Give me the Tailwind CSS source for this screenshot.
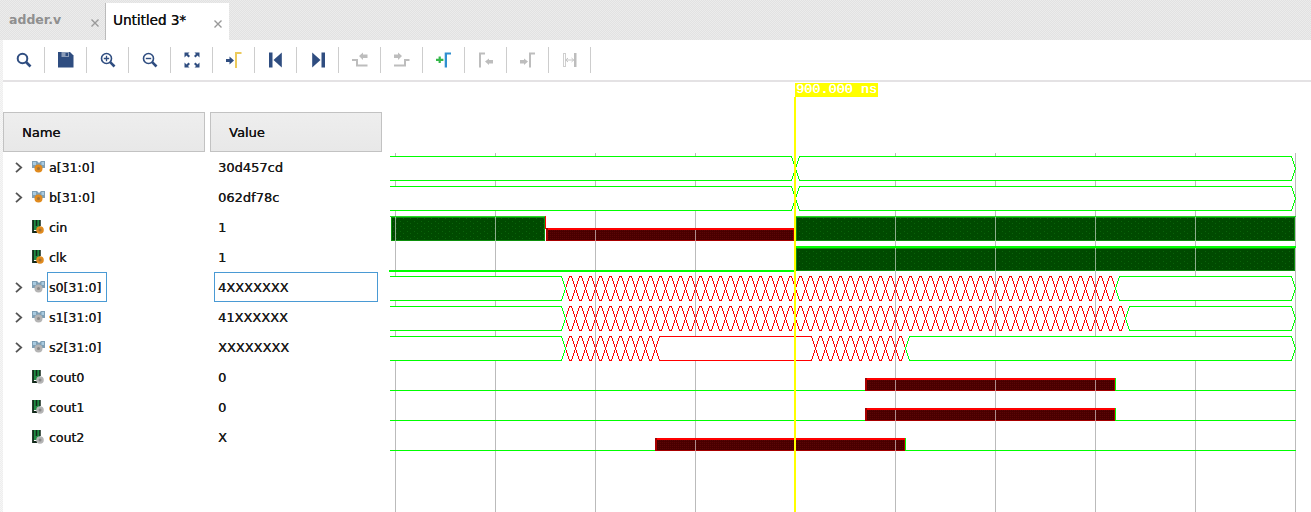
<!DOCTYPE html>
<html lang="en">
<head>
  <meta charset="UTF-8" />
  <title>Waveform</title>
  <script src="https://cdn.jsdelivr.net/npm/@tailwindcss/browser@4"></script>
</head>
<body class="bg-white">
<div class="w-[1311px] h-[512px] overflow-hidden flex flex-col font-['DejaVu_Sans',sans-serif] bg-[repeating-conic-gradient(#eeeeee_0_25%,#f6f6f6_0_50%)] bg-[length:2px_2px]">

  <!-- Tabs -->
  <div class="h-10 flex pl-[3px] bg-[repeating-conic-gradient(#e2e2e2_0_25%,#ececec_0_50%)] bg-[length:2px_2px]">
    <div class="w-[102px] flex items-center pl-[6px] relative">
      <span class="text-[12.5px] font-bold text-[#8f8f8f]">adder.v</span>
      <svg class="ml-[30px] mt-[5px]" width="8" height="8" viewBox="0 0 8 8"><path d="M0.5 0.5 7.5 7.5M7.5 0.5 0.5 7.5" stroke="#999" stroke-width="1.4"/></svg>
    </div>
    <div class="w-px mt-[3px] bg-[#bbb]"></div>
    <div class="w-[123px] mt-[3px] bg-white flex items-center pl-[7px] pb-[3px]">
      <span class="text-[13.5px] text-[#111] [text-shadow:0.3px_0_0_#111]">Untitled 3*</span>
      <svg class="ml-[28px] mt-[7px]" width="8" height="8" viewBox="0 0 8 8"><path d="M0.5 0.5 7.5 7.5M7.5 0.5 0.5 7.5" stroke="#999" stroke-width="1.4"/></svg>
    </div>
  </div>

  <!-- Toolbar -->
  <div class="h-10 ml-[3px] flex items-center bg-white">
    <div class="w-[41px] flex justify-center"><svg width="16" height="16" viewBox="0 0 16 16" fill="none" stroke="#2f4d80"><circle cx="6.5" cy="6.5" r="4.8" stroke-width="2"/><path d="M10 10 14.5 14.5" stroke-width="2.6"/></svg></div>
    <span class="w-px h-[26px] bg-[#cdcdcd]"></span>
    <div class="w-[41px] flex justify-center"><svg width="16" height="16" viewBox="0 0 16 16"><path d="M0 0H12L15.5 3.5V15.5H0Z" fill="#2f4d80"/><rect x="3.5" y="0" width="7.5" height="5" fill="#8b9cb8"/><rect x="7.5" y="1" width="2.5" height="3" fill="#2f4d80"/></svg></div>
    <span class="w-px h-[26px] bg-[#cdcdcd]"></span>
    <div class="w-[41px] flex justify-center"><svg width="16" height="16" viewBox="0 0 16 16" fill="none" stroke="#2f4d80"><circle cx="6.5" cy="6.5" r="5" stroke-width="1.6"/><path d="M10.2 10.2 14.5 14.5" stroke-width="2.6"/><path d="M3.8 6.5H9.2M6.5 3.8V9.2" stroke-width="1.3"/></svg></div>
    <span class="w-px h-[26px] bg-[#cdcdcd]"></span>
    <div class="w-[41px] flex justify-center"><svg width="16" height="16" viewBox="0 0 16 16" fill="none" stroke="#2f4d80"><circle cx="6.5" cy="6.5" r="5" stroke-width="1.6"/><path d="M10.2 10.2 14.5 14.5" stroke-width="2.6"/><path d="M3.8 6.5H9.2" stroke-width="1.4"/></svg></div>
    <span class="w-px h-[26px] bg-[#cdcdcd]"></span>
    <div class="w-[41px] flex justify-center"><svg width="16" height="16" viewBox="0 0 16 16" fill="#2f4d80"><path d="M0.500 0.500H5.500L4 2 6 4 4.500 5.500 2.500 3.500 0.500 5.500Z"/><path d="M15.500 0.500H10.500L12 2 10 4 11.500 5.500 13.500 3.500 15.500 5.500Z"/><path d="M0.500 15.500H5.500L4 14 6 12 4.500 10.500 2.500 12.500 0.500 10.500Z"/><path d="M15.500 15.500H10.500L12 14 10 12 11.500 10.500 13.500 12.500 15.500 10.500Z"/></svg></div>
    <span class="w-px h-[26px] bg-[#cdcdcd]"></span>
    <div class="w-[41px] flex justify-center"><svg width="16" height="16" viewBox="0 0 16 16"><path d="M0 7H3.5V4.5L8 8.5 3.5 12.5V10H0Z" fill="#2f4d80"/><path d="M9 16V0H15.5V2H11V16Z" fill="#ecca5c"/></svg></div>
    <span class="w-px h-[26px] bg-[#cdcdcd]"></span>
    <div class="w-[41px] flex justify-center"><svg width="16" height="16" viewBox="0 0 16 16" fill="#2f4d80"><rect x="1" y="0.5" width="3.5" height="15"/><path d="M13.8 0.5V15.5L5.5 8Z"/></svg></div>
    <span class="w-px h-[26px] bg-[#cdcdcd]"></span>
    <div class="w-[41px] flex justify-center"><svg width="16" height="16" viewBox="0 0 16 16" fill="#2f4d80"><rect x="11.5" y="0.5" width="3.5" height="15"/><path d="M2.2 0.5V15.5L10.5 8Z"/></svg></div>
    <span class="w-px h-[26px] bg-[#cdcdcd]"></span>
    <div class="w-[41px] flex justify-center"><svg width="16" height="16" viewBox="0 0 16 16"><path d="M0 8H5V13.5H15.5" fill="none" stroke="#bdbdbd" stroke-width="2"/><path d="M7 4 11 0.5V2.5H15.5V6H11V8Z" fill="#bdbdbd"/></svg></div>
    <span class="w-px h-[26px] bg-[#cdcdcd]"></span>
    <div class="w-[41px] flex justify-center"><svg width="16" height="16" viewBox="0 0 16 16"><path d="M0 13.5H11V8H15.5" fill="none" stroke="#bdbdbd" stroke-width="2"/><path d="M0 2.5H4V0.5L8 4 4 8V6H0Z" fill="#bdbdbd"/></svg></div>
    <span class="w-px h-[26px] bg-[#cdcdcd]"></span>
    <div class="w-[41px] flex justify-center"><svg width="16" height="16" viewBox="0 0 16 16"><path d="M2.6 5H4.8V7.2H7.4V9.4H4.8V11.6H2.6V9.4H0V7.2H2.6Z" transform="translate(0 -0.5)" fill="#35b84a"/><path d="M8.7 15.5V0.5H15V2.5H11V15.5Z" fill="#2f8fd0"/></svg></div>
    <span class="w-px h-[26px] bg-[#cdcdcd]"></span>
    <div class="w-[41px] flex justify-center"><svg width="16" height="16" viewBox="0 0 16 16" fill="#bdbdbd"><path d="M1 15.5V0.5H7V2.5H3V15.5Z"/><path d="M7 9.5 11 6.5V8H15V11.5H11V13Z"/></svg></div>
    <span class="w-px h-[26px] bg-[#cdcdcd]"></span>
    <div class="w-[41px] flex justify-center"><svg width="16" height="16" viewBox="0 0 16 16" fill="#bdbdbd"><path d="M9 15.5V0.5H15V2.5H11V15.5Z"/><path d="M0 8H4V6.5L8 9.5 4 13V11.5H0Z"/></svg></div>
    <span class="w-px h-[26px] bg-[#cdcdcd]"></span>
    <div class="w-[41px] flex justify-center"><svg width="16" height="16" viewBox="0 0 16 16"><rect x="1.5" y="1.5" width="2" height="13" fill="none" stroke="#cfcfcf"/><rect x="12" y="1" width="2.5" height="14" fill="#bdbdbd"/><path d="M3.5 8H12M6 6 3.8 8 6 10M9.5 6 11.7 8 9.5 10" fill="none" stroke="#c4c4c4"/></svg></div>
    <span class="w-px h-[26px] bg-[#cdcdcd]"></span>
  </div>
  <div class="h-0.5 ml-[3px] bg-[#e4e2e4]"></div>

  <!-- Main -->
  <div class="flex-1 flex min-h-0 ml-[3px] bg-white">
    <div class="w-[382px] pt-[30px] shrink-0">
      <div class="flex gap-[5px]">
        <div class="w-[202px] h-10 border border-[#c2c2c2] bg-linear-to-b from-[#eeeeee] to-[#e8e8e8] flex items-center pl-[18px] pt-px text-[13px] text-[#111] [text-shadow:0.3px_0_0_#111]">Name</div>
        <div class="w-[172px] h-10 border border-[#c2c2c2] bg-linear-to-b from-[#eeeeee] to-[#e8e8e8] flex items-center pl-[18px] pt-px text-[13px] text-[#111] [text-shadow:0.3px_0_0_#111]">Value</div>
      </div>
      <div id="rows"></div>
    </div>

    <div class="relative flex-1">
      <svg id="wave" class="block" width="926" height="430" viewBox="385 82 926 430" shape-rendering="crispEdges">
        <defs>
          <pattern id="gd" width="7" height="5" patternUnits="userSpaceOnUse">
            <rect width="7" height="5" fill="#004a00"/><rect x="1" y="1" width="1" height="1" fill="#0a640a"/><rect x="4" y="3" width="1" height="1" fill="#0a640a"/>
          </pattern>
          <pattern id="rd" width="2" height="2" patternUnits="userSpaceOnUse">
            <rect width="2" height="2" fill="#4a0000"/><rect width="1" height="1" fill="#5c0606"/>
          </pattern>
        </defs>
      </svg>
      <div class="absolute left-[410px] top-px w-[83px] h-[14px] bg-[#ffff00] text-white font-['Liberation_Mono',monospace] text-[13.5px] leading-[14px] pl-px whitespace-nowrap [text-shadow:0.4px_0_0_#fff]">900.000 ns</div>
    </div>
  </div>
</div>

<script>
  const chevron = `<svg width="8" height="11" viewBox="0 0 8 11" fill="none"><path d="M1 0.8 6.2 5.500 1 10.200" stroke="#555" stroke-width="1.8"/></svg>`;

  function busIcon(dot) {
    return `<svg width="14" height="14" viewBox="0 0 14 14"><path d="M0 1H5L7 3 9 1H13V8H10V6H4V8H0Z" fill="#7f9fb5"/><path d="M1 2H4V5H1ZM9.500 2H12V5H9.500Z" fill="#a9cbe0"/><circle cx="6.500" cy="8.500" r="4" fill="${dot}"/><circle cx="6.500" cy="8.500" r="1.500" fill="#555" opacity=".45"/></svg>`;
  }
  function bitIcon(dot) {
    return `<svg width="14" height="14" viewBox="0 0 14 14"><path d="M1 0H8V10H1Z" fill="#1f8a42"/><path d="M1 0V12H5" fill="none" stroke="#12291a" stroke-width="1.800"/><path d="M4.500 0V6M8 0V6" stroke="#12291a" stroke-width="1.500"/><circle cx="8" cy="10" r="3.800" fill="${dot}"/><circle cx="8" cy="10" r="1.500" fill="#555" opacity=".45"/></svg>`;
  }

  const ORANGE = '#e08a1e', GRAY = '#b4b4b4';
  const signals = [
    ['a[31:0]', '30d457cd', true, ORANGE],
    ['b[31:0]', '062df78c', true, ORANGE],
    ['cin', '1', false, ORANGE],
    ['clk', '1', false, ORANGE],
    ['s0[31:0]', '4XXXXXXX', true, GRAY],
    ['s1[31:0]', '41XXXXXX', true, GRAY],
    ['s2[31:0]', 'XXXXXXXX', true, GRAY],
    ['cout0', '0', false, GRAY],
    ['cout1', '0', false, GRAY],
    ['cout2', 'X', false, GRAY],
  ];

  document.getElementById('rows').innerHTML = signals.map(([name, value, bus, dot], i) => {
    const picked = i === 4;
    return `
      <div class="h-[30px] flex items-center text-[#1a1a1a] whitespace-nowrap [text-shadow:0.15px_0_0_#1a1a1a]">
        <span class="w-[29px] pl-[12px] flex items-center">${bus ? chevron : ''}</span>
        <span class="w-[15px] flex items-center">${bus ? busIcon(dot) : bitIcon(dot)}</span>
        <span class="w-[167px]"><span class="inline-flex items-center h-[30px] pl-px pr-[5px] pt-[2px] text-[12.5px] border ${picked ? 'border-[#4a9ad4]' : 'border-transparent'}">${name}</span></span>
        <span class="w-[164px] h-[30px] flex items-center pl-[3px] pt-px text-[13px] border ${picked ? 'border-[#4a9ad4]' : 'border-transparent'}">${value}</span>
      </div>`;
  }).join('');

  const G = '#00ff00', R = '#ff0000', DG = '#0c8f0c', DR = '#a80000';
  let s = '';
  const rect = (x, y, w, h, fill, extra = '') => { s += `<rect x="${x}" y="${y}" width="${w}" height="${h}" fill="${fill}" ${extra}/>`; };

  // grid
  const gridX = [395, 495, 595, 695, 795, 895, 995, 1095, 1195, 1295];
  gridX.forEach(x => rect(x, 153, 1, 359, '#bbbbbb'));

  // one bus value; open = starts at the left border with no chamfer
  function seg(x0, x1, top, color, fill, open) {
    const bot = top + 24, mid = top + 12;
    const left = open ? `${x0},${top} ` : `${x0},${mid} ${x0 + 4},${top} `;
    const leftB = open ? `${x0},${bot}` : `${x0 + 4},${bot} ${x0},${mid}`;
    s += `<polyline points="${left}${x1 - 4},${top} ${x1},${mid} ${x1 - 4},${bot} ${leftB}" fill="${fill}" stroke="${color}"/>`;
  }
  function xs(x0, x1, top) {
    for (let x = x0; x < x1; x += 10) seg(x, x + 10, top, R, 'none');
  }

  // a, b
  [156.5, 186.5].forEach(t => { seg(390, 795.5, t, G, 'white', true); seg(795.5, 1295.5, t, G, 'white'); });
  // s0
  xs(565.5, 1115.5, 276.5); seg(390, 565.5, 276.5, G, 'white', true); seg(1115.5, 1295.5, 276.5, G, 'white');
  // s1
  xs(565.5, 1125.5, 306.5); seg(390, 565.5, 306.5, G, 'white', true); seg(1125.5, 1295.5, 306.5, G, 'white');
  // s2
  xs(565.5, 655.5, 336.5); xs(815.5, 905.5, 336.5);
  seg(390, 565.5, 336.5, G, 'white', true); seg(655.5, 815.5, 336.5, R, 'white'); seg(905.5, 1295.5, 336.5, G, 'white');

  function overlay(x0, x1, y0, y1) {
    gridX.filter(x => x > x0 && x < x1).forEach(x => rect(x, y0, 1, y1 - y0, '#ffffff', 'opacity=".55"'));
  }
  function high(x0, x1, y0, y1) {
    rect(x0, y0, x1 - x0, y1 - y0, 'url(#gd)');
    rect(x0, y0, x1 - x0, 1, DG); rect(x0, y1 - 1, x1 - x0, 1, DG);
    rect(x0, y0, 1, y1 - y0, DG); rect(x1 - 1, y0, 1, y1 - y0, DG);
    overlay(x0, x1, y0, y1);
  }
  function low(x0, x1, y0, y1) {
    rect(x0, y0, x1 - x0, y1 - y0, 'url(#rd)');
    rect(x0, y1 - 1, x1 - x0, 1, DR); rect(x1 - 1, y0, 1, y1 - y0, DR);
    rect(x0, y0, x1 - x0, 2, R); rect(x0, y0, 2, y1 - y0, DR);
    overlay(x0, x1, y0 + 2, y1);
  }

  // cin
  rect(390, 216, 155, 1, '#22dd22'); high(391, 545, 217, 241);
  rect(545, 216, 1, 13, R); low(546, 794, 228, 241);
  rect(796, 216, 500, 1, '#22dd22'); high(796, 1295, 217, 241);
  // clk
  rect(389, 270, 406, 2, G);
  rect(796, 246, 500, 2, G); high(796, 1295, 248, 271);
  // cout0, cout1
  [[390, 378], [420, 408]].forEach(([line, top]) => {
    rect(390, line, 475, 1, G); rect(1115, line, 181, 1, G);
    low(865, 1115, top, line + 1); rect(1115, top, 1, line - top + 1, G);
  });
  // cout2
  rect(390, 450, 265, 1, G); rect(905, 450, 391, 1, G);
  low(655, 905, 438, 451); rect(905, 438, 1, 13, G);

  // cursor
  rect(794, 97, 2, 415, '#ffff00');

  document.getElementById('wave').insertAdjacentHTML('beforeend', s);
</script>
</body>
</html>
